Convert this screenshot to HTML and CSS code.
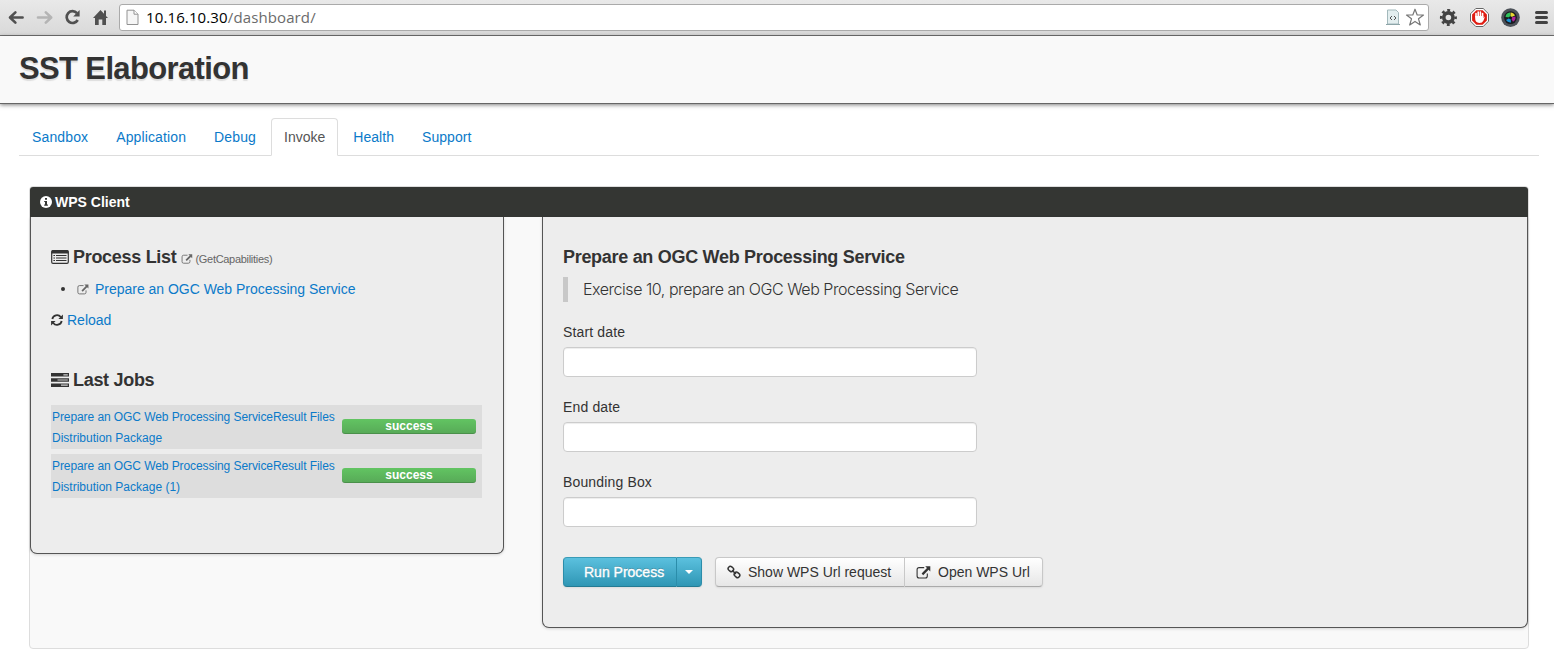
FILE: index.html
```
<!DOCTYPE html>
<html lang="en">
<head>
<meta charset="utf-8">
<title>SST Elaboration</title>
<link rel="stylesheet" href="styles.css">
</head>
<body>
<svg class="defs" aria-hidden="true">
  <symbol id="ext" viewBox="0 0 15 13"><path d="M8.2 1.6H3.1Q1.1 1.6 1.1 3.6V10Q1.1 12 3.1 12H9.3Q11.3 12 11.3 10V7.6" fill="none" stroke="currentColor" stroke-width="1.1"/><path d="M9.2.3H14.3V5.4L12.6 3.8 7.2 9.2 5.6 7.6 11 2.1Z" fill="currentColor"/></symbol>
</svg>
<div class="toolbar">
  <svg class="nav" width="112" height="35" viewBox="0 0 112 35">
    <g fill="none" stroke-width="2.6" stroke-linecap="round" stroke-linejoin="round">
      <path d="M22.6 17.5H11M15.4 12.4L10 17.5l5.4 5.1" stroke="#505050"/>
      <path d="M38 17.5H50M45.8 12.4L51.2 17.5l-5.4 5.1" stroke="#b4b4b4"/>
    </g>
    <path d="M77 13.2A5.9 5.9 0 1 0 77.7 20" fill="none" stroke="#505050" stroke-width="2.7"/>
    <path d="M79.6 10V16.4H73.2Z" fill="#505050"/>
    <path d="M93 18L100.5 10 104 13.7V10.4H106V15.9L108 18H106V25H102.3V19.5H98.7V25H95V18Z" fill="#505050"/>
  </svg>
  <div class="address">
    <svg width="13" height="17" viewBox="0 0 13 17"><path d="M1 1.2H8L12 5.2V15.5H1Z" fill="#f6f6f6" stroke="#929292"/><path d="M8 1.2V5.2H12" fill="#fff" stroke="#929292"/></svg>
    <span class="url"><b>10.16.10.30</b>/dashboard/</span>
    <svg class="src" width="14" height="17" viewBox="0 0 14 17"><path d="M1.5 1H10L12.5 3.5V15H1.5Z" fill="#e3eeef" stroke="#a3b9bc"/><path d="M0 15.5H14" stroke="#8da5a8"/><path d="M6 7L4 9l2 2M8 7l2 2-2 2" fill="none" stroke="#555"/></svg>
    <svg width="20" height="19" viewBox="0 0 20 19"><path d="M10 1.2L12.2 7H18.5L13.5 10.8 15.3 17 10 13.4 4.7 17 6.5 10.8 1.5 7H7.8Z" fill="#fff" stroke="#777" stroke-width="1.2" stroke-linejoin="round"/></svg>
  </div>
  <svg width="125" height="35" viewBox="1429 0 125 35">
    <circle cx="1448.4" cy="17.5" r="4.6" fill="none" stroke="#424242" stroke-width="3.6"/>
    <circle cx="1448.4" cy="17.5" r="7.2" fill="none" stroke="#424242" stroke-width="2.6" stroke-dasharray="2.83 2.83" stroke-dashoffset="1.4"/>
    <path d="M1475.8 8.5H1483.2L1488.5 13.8V21.2L1483.2 26.5H1475.8L1470.5 21.2V13.8Z" fill="#fff" stroke="#666"/>
    <path d="M1476.4 10.2H1482.6L1486.9 14.5V20.5L1482.6 24.8H1476.4L1472.1 20.5V14.5Z" fill="#df1c12"/>
    <path d="M1476 17V13.5M1478.2 17V12M1480.4 17V12M1482.6 17V13.6" stroke="#fff" stroke-width="1.6" stroke-linecap="round"/><path d="M1475.2 16H1483.4V18L1485 16.5 1483.5 20.5Q1482.5 23 1479.3 23 1475.2 22.6 1475.2 19Z" fill="#fff"/>
    <circle cx="1510.5" cy="17.6" r="9.3" fill="#4c5158"/><circle cx="1510.5" cy="17.6" r="6.4" fill="#191b20"/>
    <path d="M1510.5 17.6L1505.5 17A5 5 0 0 1 1510 12.6Z" fill="#2fc15b"/><path d="M1510.5 17.6V12.6A5 5 0 0 1 1515 15.5Z" fill="#e7d632"/><path d="M1510.5 17.6L1515.4 16.5A5 5 0 0 1 1513 21.8Z" fill="#b4259a"/><path d="M1510.5 17.6L1511 22.4A5 5 0 0 1 1506 20Z" fill="#1793d8"/><circle cx="1510.5" cy="17.8" r="1.5" fill="#101218"/>
    <path d="M1536.5 12.6H1546.5M1536.5 17.6H1546.5M1536.5 22.6H1546.5" stroke="#424242" stroke-width="3" stroke-linecap="round"/>
  </svg>
</div>
<header class="masthead"><h1><span>SST Elaboration</span></h1></header>
<nav class="tabs">
  <a><span>Sandbox</span></a><a><span>Application</span></a><a><span>Debug</span></a><a class="active"><span>Invoke</span></a><a><span>Health</span></a><a><span>Support</span></a>
</nav>
<main class="client">
  <div class="client-title">
    <svg width="12" height="12" viewBox="0 0 12 12"><circle cx="6" cy="6" r="6" fill="#fff"/><path d="M5 2H7V3.7H5ZM4.2 4.9H7V8.5H7.9V9.7H4.2V8.5H5V6.1H4.2Z" fill="#343633"/></svg>
    <span>WPS Client</span>
  </div>
  <div class="columns">
    <section class="panel left">
      <h2><svg width="18" height="14" viewBox="0 0 18 14"><rect x=".7" y=".7" width="16.6" height="12.6" rx="1.3" fill="none" stroke="#333" stroke-width="1.2"/><path d="M.5 1.5Q.5 0 2 0H16Q17.5 0 17.5 1.5V3.4H.5Z" fill="#333"/><path d="M2.4 5.5H4M2.4 8H4M2.4 10.5H4M5 5.5H15.5M5 8H15.5M5 10.5H15.5" stroke="#333" stroke-width="1.2"/></svg><span>Process List</span><small><svg width="12" height="10"><use href="#ext"/></svg><span>(GetCapabilities)</span></small></h2>
      <ul class="processes"><li><svg width="12" height="11"><use href="#ext"/></svg><a><span>Prepare an OGC Web Processing Service</span></a></li></ul>
      <a class="reload"><svg width="12" height="12" viewBox="0 0 12 12"><path d="M1.3 5A4.8 4.8 0 0 1 9.8 3M10.7 7A4.8 4.8 0 0 1 2.2 9" fill="none" stroke="#333" stroke-width="1.8"/><path d="M11.9.5V5H7.4ZM.1 11.5V7H4.6Z" fill="#333"/></svg><span>Reload</span></a>
      <h2 class="jobs-title"><svg width="18" height="14" viewBox="0 0 18 14"><path d="M0 0H18V3.6H0ZM0 5.2H18V8.8H0ZM0 10.4H18V14H0Z" fill="#333"/><path d="M12.4 1.2H16.8V2.4H12.4ZM6.5 6.4H16.8V7.6H6.5ZM10 11.6H16.8V12.8H10Z" fill="#ccc"/></svg><span>Last Jobs</span></h2>
      <div class="job"><a><span class="job-name">Prepare an OGC Web Processing ServiceResult Files</span><br><span>Distribution Package</span></a><b class="badge">success</b></div>
      <div class="job"><a><span class="job-name">Prepare an OGC Web Processing ServiceResult Files</span><br><span>Distribution Package (1)</span></a><b class="badge">success</b></div>
    </section>
    <section class="panel right">
      <h2><span>Prepare an OGC Web Processing Service</span></h2>
      <blockquote><span>Exercise 10, prepare an OGC Web Processing Service</span></blockquote>
      <label><span>Start date</span><input type="text"></label>
      <label><span>End date</span><input type="text"></label>
      <label><span>Bounding Box</span><input type="text"></label>
      <div class="actions">
        <div class="group primary"><button class="run"><span>Run Process</span></button><button class="more"><i class="caret"></i></button></div>
        <div class="group"><button class="show"><svg width="14" height="14" viewBox="0 0 14 14"><g fill="none" stroke="#333" stroke-width="1.5"><rect x="1.1" y="1.9" width="5.6" height="4.4" rx="2.1" transform="rotate(40 4 4)"/><rect x="7" y="7.7" width="5.8" height="4.4" rx="2.1" transform="rotate(40 10 10)"/><path d="M5 5.2L9 9"/></g></svg><span>Show WPS Url request</span></button><button class="open"><svg width="15" height="13"><use href="#ext"/></svg><span>Open WPS Url</span></button></div>
      </div>
    </section>
  </div>
</main>
</body>
</html>
```
FILE: styles.css
```
* { box-sizing: border-box; }
body { margin: 0; height: 659px; overflow: hidden; background: #fff; color: #333; font: 14px/20px "Liberation Sans", Arial, sans-serif; }
h1, h2, ul, blockquote { margin: 0; padding: 0; }
span { white-space: nowrap; }
svg { flex: none; display: block; }
.defs { display: none; }
a { color: #0b7ac9; }

.toolbar { display: flex; height: 36px; background: linear-gradient(#e9e9e9, #d9d9d9); border-bottom: 1px solid #747474; }
.nav { margin-right: 7px; }
.address { display: flex; align-items: center; flex: 1; height: 27px; margin-top: 4px; padding: 0 3px 0 6px; border: 1px solid #aaa; border-radius: 3px; background: #fff; }
.url { flex: 1; margin: 0 0 2px 7px; font: 15px/20px "Open Sans", "Noto Sans", sans-serif; letter-spacing: .12px; color: #6b6b6b; }
.url b { font-weight: 400; color: #000; }
.src { margin-right: 5px; }

.masthead { height: 68px; padding: 13px 19px 0; background: #f9f9f9; border-bottom: 1px solid #666; box-shadow: 0 1px 4px rgba(0,0,0,.5); }
h1 { font-size: 31px; line-height: 40px; letter-spacing: -.64px; text-shadow: 0 2px 1px #ddd; }

.tabs { display: flex; height: 38px; margin: 14px 15px 0 19px; border-bottom: 1px solid #ddd; }
.tabs a { flex: none; height: 38px; padding: 8px 12px 0; margin-right: 2px; border: 1px solid transparent; border-radius: 4px 4px 0 0; letter-spacing: .13px; }
.tabs .active { color: #555; background: #fff; border-color: #ddd #ddd #fff; letter-spacing: 0; }
.tabs .active ~ a { letter-spacing: .05px; }

.client { height: 463px; margin: 30px 25px 0 29px; border: 1px solid #ddd; border-radius: 4px; background: #f9f9f9; }
.client-title { display: flex; align-items: center; gap: 3px; height: 30px; padding-left: 10px; color: #fff; background: #343633; border-radius: 3px 3px 0 0; font-weight: 700; }
.columns { display: flex; justify-content: space-between; align-items: flex-start; }
.panel { padding: 30px 20px 0; background: #ededed; border: 1px solid #555; border-top: 0; border-radius: 0 0 7px 7px; box-shadow: 0 1px 3px rgba(0,0,0,.15); }
.left { width: 474px; height: 337px; }
.right { width: 986px; height: 411px; }
h2 { display: flex; align-items: center; gap: 4px; height: 20px; font-size: 18px; line-height: 20px; letter-spacing: -.3px; }
small { display: flex; align-items: center; gap: 2px; height: 16px; margin: 4px 0 0 1px; font-size: 11px; line-height: 16px; font-weight: 400; color: #666; }
.processes { margin-top: 12px; list-style: none; }
.processes li { display: flex; align-items: center; height: 20px; padding-left: 10px; color: #666; }
.processes li::before { content: ""; width: 4px; height: 4px; margin-right: 12px; border-radius: 50%; background: #333; }
.processes a { margin-left: 6px; letter-spacing: -.02px; }
.reload { display: flex; align-items: center; gap: 4px; margin-top: 11px; }
.jobs-title { margin: 40px 0 15px; }
.job { display: flex; align-items: flex-start; justify-content: space-between; width: 431px; height: 44px; padding: 2px 6px 0 1px; margin-bottom: 5px; background: #ddd; font-size: 12px; line-height: 21px; }
.job-name { letter-spacing: -.08px; }
.badge { width: 134px; height: 15px; margin-top: 12px; border-radius: 3px; color: #fff; background: linear-gradient(#62c462, #57a957); box-shadow: inset 0 -1px rgba(0,0,0,.15); line-height: 15px; text-align: center; }

blockquote { height: 25px; margin: 10px 0 20px; padding-left: 15px; border-left: 5px solid #c8c8c8; font: 300 16px/25px Inter, "Liberation Sans", sans-serif; letter-spacing: -.46px; }
label { display: block; height: 75px; letter-spacing: .15px; }
label span { display: inline-block; height: 20px; }
input { display: block; width: 414px; height: 30px; margin-top: 5px; border: 1px solid #ccc; border-radius: 4px; background: #fff; box-shadow: inset 0 1px 1px rgba(0,0,0,.075); }
.actions { display: flex; gap: 13px; margin-top: 10px; }
.group { display: flex; height: 30px; border-radius: 4px; box-shadow: 0 1px 2px rgba(0,0,0,.08); }
button { display: flex; align-items: center; height: 30px; margin: 0; padding: 0 0 0 11px; border: 1px solid #c8c8c8; border-bottom-color: #aaa; background: linear-gradient(#fff, #e6e6e6); color: #333; font: 14px/20px "Liberation Sans", Arial, sans-serif; }
button:first-child { border-radius: 4px 0 0 4px; }
button:last-child { border-left: 0; border-radius: 0 4px 4px 0; }
.primary button { color: #fff; background: linear-gradient(#5bc0de, #2f96b4); border-color: #399bb6 #2b8daa #247b93; text-shadow: 0 -1px rgba(0,0,0,.25); -webkit-text-stroke: .35px #fff; }
.run { width: 114px; }
.primary .run { padding-left: 20px; }
.more { width: 25px; }
.primary .more { padding-left: 8px; }
.caret { border: 4px solid transparent; border-top-color: #fff; border-bottom: 0; }
.show { width: 190px; gap: 7px; }
.open { width: 138px; gap: 7px; }
```
